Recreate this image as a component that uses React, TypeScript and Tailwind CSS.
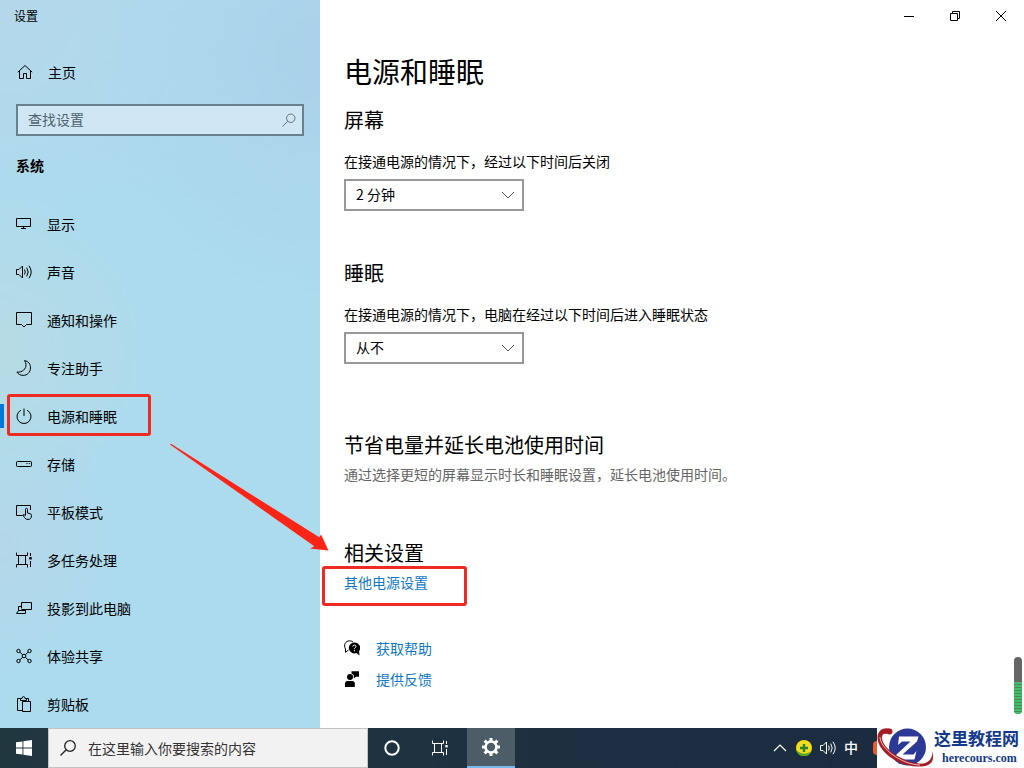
import { useState, type ReactNode } from "react";

interface NavEntry {
    id: string;
    label: string;
    icon: ReactNode;
}

function Glyph({ children, className = "size-4" }: { children: ReactNode; className?: string }) {
    return (
        <svg viewBox="0 0 16 16" fill="none" stroke="currentColor" className={`shrink-0 ${className}`} aria-hidden="true">
            {children}
        </svg>
    );
}

const speakerPaths = (
    <>
        <path d="M.5 5.5H3L6.5 2v12L3 10.5H.5z" />
        <path d="M8.5 5.5q1.6 2.5 0 5M10.7 3.6q3 4.4 0 8.8M13 1.8q4.4 6.2 0 12.4" />
    </>
);

const taskViewPaths = (
    <>
        <path d="M.5 .5v3h11v-3M.5 15.500v-3h11v3M2.500 3.500v9M9.500 3.500v9M14.500 1v3M14.500 9v6" />
        <path d="M13.3 5h2.4v2.4h-2.4z" fill="currentColor" stroke="none" />
    </>
);

const NAV_ENTRIES: NavEntry[] = [
    { id: "display", label: "显示", icon: <path d="M.5 2.5h14v8H.5zM7.5 10.5v2M5 12.5h5" /> },
    { id: "sound", label: "声音", icon: speakerPaths },
    { id: "notify", label: "通知和操作", icon: <path d="M.5.5h15v12h-5L8 15l-2.500-2.500h-5z" /> },
    {
        id: "focus",
        label: "专注助手",
        icon: <path d="M8.5.6C12.5 1.2 14.6 4.2 14.5 8c-.2 4.500-3.400 7.400-7.300 7.400-2.700 0-4.900-1.200-6.300-3.300C6 12.700 10.300 9 10 4.600 9.900 3 9.400 1.700 8.500.6z" />,
    },
    { id: "power", label: "电源和睡眠", icon: <path d="M8 .5V8M4.8 2.300a7 7 0 1 0 6.400 0" /> },
    {
        id: "storage",
        label: "存储",
        icon: (
            <>
                <rect x=".5" y="5.5" width="15" height="5" rx=".8" />
                <path d="M10.5 7.5h1M12.800 7.500h1" />
            </>
        ),
    },
    {
        id: "tablet",
        label: "平板模式",
        icon: (
            <path d="M6.500 11.500H.5v-10h14v4.500M9.500 11.500V5.500q0-1.200 1-1.200t1 1.200V9l2.600.7q1.400.3 1.400 1.600 0 4.200-3.500 4.200-2.200 0-3.300-1.700l-1.900-2.800q1-1.200 2.700.5" />
        ),
    },
    { id: "multitask", label: "多任务处理", icon: taskViewPaths },
    { id: "project", label: "投影到此电脑", icon: <path d="M5.500 8.500v-6h10v7h-6M5.500 6.500h-3v4l-2 3h9v-3h-7M9.500 10.500v-1h-4" /> },
    {
        id: "share",
        label: "体验共享",
        icon: (
            <>
                <circle cx="2.500" cy="3" r="1.700" />
                <circle cx="13.500" cy="3" r="1.700" />
                <circle cx="2.500" cy="13" r="1.700" />
                <circle cx="13.500" cy="13" r="1.700" />
                <circle cx="8" cy="8" r="1.800" />
                <path d="M3.800 4.200l2.800 2.500M12.200 4.200L9.400 6.700M3.800 11.800l2.800-2.500M12.200 11.800L9.400 9.300" />
            </>
        ),
    },
    {
        id: "clipboard",
        label: "剪贴板",
        icon: <path d="M6 14.500H1.500v-12h3v2h6v-2h2v3M4.500 2.500h1.500q0-1.900 1.500-1.900t1.500 1.900h1.500M6.500 5.500h8v10h-8z" />,
    },
];

function NavButton({ entry, active, onSelect }: { entry: NavEntry; active: boolean; onSelect: () => void }) {
    return (
        <li>
            <button
                onClick={onSelect}
                className="relative flex h-12 w-full items-center gap-[15px] pl-4 text-left text-sm hover:bg-white/20"
            >
                {active && <span className="absolute left-0 h-6 w-1 bg-[#0078d7]" />}
                {entry.id === "power" && (
                    <span className="pointer-events-none absolute top-0.5 left-[7px] h-[42px] w-36 rounded-[3px] border-3 border-[#ee2a22]" />
                )}
                <Glyph>{entry.icon}</Glyph>
                <span>{entry.label}</span>
            </button>
        </li>
    );
}

function Sidebar() {
    const [current, setCurrent] = useState("power");

    return (
        <aside className="w-80 shrink-0 overflow-hidden bg-[#acdbee] bg-[radial-gradient(circle_at_0%_48%,#b7dbe4_0%,transparent_32%),radial-gradient(circle_at_0%_0%,#b5d7ea_0%,transparent_30%),radial-gradient(circle_at_100%_8%,#aad2ea_0%,transparent_35%),radial-gradient(circle_at_0%_75%,#b4d7e9_0%,transparent_22%)]">
            <div className="flex h-8 items-center pl-3.5 text-xs">设置</div>
            <button className="mt-4 flex h-12 w-full items-center gap-[15px] pl-[17px] text-sm">
                <Glyph>
                    <path d="M.8 8.200L8 1.500l7.200 6.700M2.500 7v7.500h4v-5h3v5h4V7" />
                </Glyph>
                主页
            </button>
            <div className="mx-4 mt-2 flex h-8 items-center border-2 border-[#67818f] bg-[#cfe7f5]">
                <input
                    type="text"
                    aria-label="查找设置"
                    placeholder="查找设置"
                    className="h-full min-w-0 flex-1 bg-transparent pb-0.5 pl-2.5 text-sm outline-none placeholder:text-[#50626d]"
                />
                <Glyph className="mr-1.5 size-3.5 text-[#50626d]">
                    <circle cx="10" cy="6" r="4.800" />
                    <path d="M6.500 9.500l-6 6" />
                </Glyph>
            </div>
            <h2 className="mt-4 pl-4 text-sm leading-[26px] font-bold">系统</h2>
            <ul className="mt-[22px]">
                {NAV_ENTRIES.map((entry) => (
                    <NavButton
                        key={entry.id}
                        entry={entry}
                        active={entry.id === current}
                        onSelect={() => setCurrent(entry.id)}
                    />
                ))}
            </ul>
        </aside>
    );
}

function TimeoutSelect({ id, label, options }: { id: string; label: string; options: string[] }) {
    return (
        <div className="mt-[15px]">
            <label htmlFor={id} className="block text-sm leading-5">
                {label}
            </label>
            <div className="relative mt-2 w-45">
                <select
                    id={id}
                    className="block h-8 w-full appearance-none border-2 border-[#999] bg-white pb-0.5 pl-2.5 text-sm outline-none"
                >
                    {options.map((option) => (
                        <option key={option}>{option}</option>
                    ))}
                </select>
                <Glyph className="pointer-events-none absolute top-2 right-2 size-4 text-[#555]">
                    <path d="M2 5l6 6 6-6" />
                </Glyph>
            </div>
        </div>
    );
}

function WindowControls() {
    return (
        <div className="flex h-8 justify-end">
            <button aria-label="最小化" className="flex w-[46px] items-center justify-center hover:bg-gray-200">
                <Glyph>
                    <path d="M3 8.500h10" />
                </Glyph>
            </button>
            <button aria-label="还原" className="flex w-[46px] items-center justify-center hover:bg-gray-200">
                <Glyph>
                    <path d="M3.500 5.500h7v7h-7zM5.500 5.500v-2h7v7h-2" />
                </Glyph>
            </button>
            <button aria-label="关闭" className="flex w-[46px] items-center justify-center hover:bg-red-500">
                <Glyph>
                    <path d="M3 3l10 10M13 3L3 13" />
                </Glyph>
            </button>
        </div>
    );
}

function PowerPage() {
    const headingClass = "text-xl leading-8";

    return (
        <main className="relative min-w-0 flex-1 bg-white">
            <WindowControls />
            <div className="pt-4 pl-6">
                <h1 className="text-[28px] leading-[46px]">电源和睡眠</h1>

                <h2 className={`mt-2.5 ${headingClass}`}>屏幕</h2>
                <TimeoutSelect
                    id="screen-off"
                    label="在接通电源的情况下，经过以下时间后关闭"
                    options={["2 分钟", "5 分钟", "10 分钟", "从不"]}
                />

                <h2 className={`mt-[46px] ${headingClass}`}>睡眠</h2>
                <TimeoutSelect
                    id="sleep-after"
                    label="在接通电源的情况下，电脑在经过以下时间后进入睡眠状态"
                    options={["从不", "10 分钟", "30 分钟"]}
                />

                <h2 className={`mt-[65px] ${headingClass}`}>节省电量并延长电池使用时间</h2>
                <p className="mt-[3px] text-sm leading-5 text-[#666]">
                    通过选择更短的屏幕显示时长和睡眠设置，延长电池使用时间。
                </p>

                <h2 className={`mt-[53px] ${headingClass}`}>相关设置</h2>
                <div className="relative mt-[3px] text-sm leading-5">
                    <a href="#power-options" className="text-[#0f78c8]">
                        其他电源设置
                    </a>
                    <span className="pointer-events-none absolute -top-1.5 -left-[22px] h-10 w-[145px] rounded-[3px] border-3 border-[#ee2a22]" />
                </div>

                <div className="mt-[46px] flex flex-col gap-[11px] text-sm leading-5 text-[#0f78c8]">
                    <a href="#help" className="flex items-center gap-4">
                        <Glyph className="size-4 text-black">
                            <path d="M4.500 10L1.500 12.300V9C-.8 5.200 1.500.8 5.500.8q2 0 3.500 1.200" />
                            <path
                                d="M10.300 2.600a5.400 5.400 0 1 0 2 10.400l3.200 2.500-.4-4.300a5.400 5.400 0 0 0-4.800-8.600z"
                                fill="currentColor"
                                stroke="none"
                            />
                            <path d="M8.800 6.600q0-1.500 1.600-1.500t1.600 1.400q0 .8-.9 1.300t-.7 1.400M10.400 10v1.300" stroke="white" />
                        </Glyph>
                        获取帮助
                    </a>
                    <a href="#feedback" className="flex items-center gap-4">
                        <Glyph className="size-4 text-black">
                            <g fill="currentColor" stroke="none">
                                <circle cx="6" cy="6" r="3" />
                                <path d="M1 16v-3.500Q1 10 3.500 10h4.800q2.500 0 2.500 2.500V16z" />
                                <path d="M7.500.3H15v5.400h-3L9.800 7.500V4.200L7.500 2.500z" />
                            </g>
                        </Glyph>
                        提供反馈
                    </a>
                </div>
            </div>

            {/* scroll thumb with the green level stripes */}
            <div className="absolute right-0.5 bottom-3.5 flex h-[57px] w-2 flex-col justify-end overflow-hidden rounded-full bg-[#666]">
                <div className="h-8 bg-[repeating-linear-gradient(#3fbf67_0_2px,#4b8a5c_2px_3px)]" />
            </div>
        </main>
    );
}

function SiteLogo() {
    return (
        <div className="flex h-full w-[147px] items-center bg-white text-[#12398c]">
            <svg viewBox="0 0 58 40" className="h-10 w-[58px] shrink-0" aria-hidden="true">
                <circle cx="30.500" cy="19" r="18.500" fill="#2b3896" />
                <path d="M22 8.500h19.500l-1.500 5-14.500 13h11l3-3.500-2 8.500H18l1.500-5L33.500 13.500H25l-4 3.500z" fill="white" />
                <path
                    d="M14 1.500C8-1.500 1 1.500.5 9 0 22 20 39 42 38.500c11 0 16-4 13.500-15C55.500 32 50 36.500 42 35.500 25 33.500 4.500 20 5 9 5.300 6 7 5 9.500 6z"
                    fill="#a51d25"
                />
                <circle cx="12.500" cy="3.500" r="3" fill="#a51d25" />
                <path d="M3 9C3 20 24 36.500 43 37" fill="none" stroke="white" strokeWidth=".7" />
            </svg>
            <div className="-ml-px whitespace-nowrap">
                <div className="font-['Liberation_Serif','Noto_Sans_CJK_SC',serif] text-[17px] leading-5 font-bold">
                    这里教程网
                </div>
                <div className="pl-2 font-['Liberation_Serif',serif] text-xs leading-4 font-bold">herecours.com</div>
            </div>
        </div>
    );
}

function Taskbar() {
    return (
        <footer className="flex h-10 shrink-0 bg-linear-to-r from-[#213740] to-[#1b2a40] text-white">
            <button aria-label="开始" className="flex w-12 items-center justify-center">
                <svg viewBox="0 0 16 16" className="size-4" fill="currentColor" aria-hidden="true">
                    <path d="M0 2.300L6.500 1.400v6.100H0zM7.400 1.300L16 0v7.500H7.400zM0 8.400h6.500v6.200L0 13.700zM7.400 8.400H16V16l-8.600-1.300z" />
                </svg>
            </button>
            <div className="flex w-80 items-center border border-[#c4c4c4] bg-[#f2f2f2] text-[#222]">
                <Glyph className="ml-[11px] size-4">
                    <circle cx="10" cy="6" r="5.300" strokeWidth="1.300" />
                    <path d="M6.200 9.800L.5 15.500" strokeWidth="1.300" />
                </Glyph>
                <input
                    type="text"
                    aria-label="在这里输入你要搜索的内容"
                    placeholder="在这里输入你要搜索的内容"
                    className="h-full min-w-0 flex-1 bg-transparent pl-3 text-sm outline-none placeholder:text-[#333]"
                />
            </div>
            <button aria-label="Cortana" className="flex w-12 items-center justify-center">
                <Glyph>
                    <circle cx="8" cy="8" r="6.700" strokeWidth="2" />
                </Glyph>
            </button>
            <button aria-label="任务视图" className="flex w-12 items-center justify-center">
                <Glyph>{taskViewPaths}</Glyph>
            </button>
            <button
                aria-label="设置"
                className="ml-[3px] flex w-12 items-center justify-center border-b-2 border-[#76b9ed] bg-[#4c5d67]"
            >
                <svg viewBox="0 0 20 20" className="size-5" fill="none" stroke="currentColor" aria-hidden="true">
                    <circle cx="10" cy="10" r="5.500" strokeWidth="2.600" />
                    <path
                        d="M10 1v3M10 16v3M1 10h3M16 10h3M3.600 3.600l2.200 2.200M14.200 14.200l2.200 2.200M3.600 16.400l2.200-2.200M14.200 5.800l2.200-2.200"
                        strokeWidth="3"
                    />
                </svg>
            </button>

            <div className="ml-auto flex items-center gap-2 text-sm">
                <Glyph>
                    <path d="M2 11l6-6 6 6" strokeWidth="1.200" />
                </Glyph>
                <Glyph>
                    <circle cx="8" cy="8" r="8" fill="#f3dc1c" stroke="none" />
                    <path d="M.2 10A8 8 0 0 0 15.500 11Q8 17 .2 10z" fill="#55a52a" stroke="none" />
                    <path d="M8 4v8M4 8h8" stroke="#268036" strokeWidth="2.400" />
                </Glyph>
                <Glyph>{speakerPaths}</Glyph>
                <span className="pb-0.5 font-medium">中</span>
                <span className="ml-[7px] h-3.5 w-1 rounded-l-sm bg-[#f0592b]" />
            </div>
            <SiteLogo />
        </footer>
    );
}

export default function App() {
    return (
        <div className="relative flex h-screen flex-col overflow-hidden font-['Noto_Sans_CJK_SC',sans-serif] text-black">
            <div className="flex min-h-0 flex-1">
                <Sidebar />
                <PowerPage />
            </div>
            <Taskbar />

            {/* pointer from the menu entry to the link */}
            <svg
                viewBox="0 0 160 108"
                className="pointer-events-none absolute top-[443px] left-[169px] h-27 w-40"
                fill="#fb2416"
                aria-hidden="true"
            >
                <path d="M1 1.500L2 .8l148.300 93.500 1.700-2.800 7.500 16-18.500-2 4.300-2.300z" />
            </svg>
        </div>
    );
}
